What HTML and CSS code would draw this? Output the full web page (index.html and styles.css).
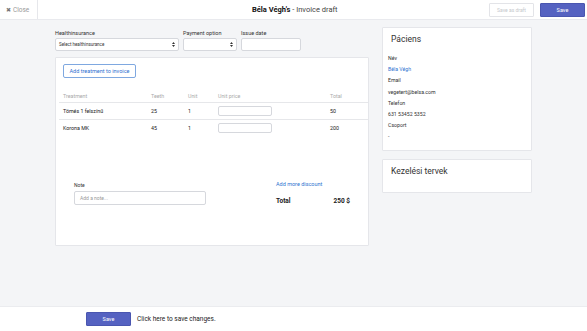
FILE: index.html
```html
<!DOCTYPE html>
<html lang="hu">
<head>
    <meta charset="UTF-8">
    <meta name="viewport" content="width=device-width, initial-scale=1.0">
    <title>Invoice draft</title>
    <link rel="stylesheet" href="styles.css">
</head>
<body>
    <!-- Top bar -->
    <div class="topbar">
        <div class="close-link"><span class="close-x">&#10006;</span> Close</div>
        <div class="page-title"><strong>Béla Végh's</strong> - Invoice draft</div>
        <div class="top-actions">
            <button class="btn btn-ghost">Save as draft</button>
            <button class="btn btn-primary btn-top">Save</button>
        </div>
    </div>

    <div class="content">
        <div class="main-col">
            <div class="field-row">
                <div class="field field-hi">
                    <label>Healthinsurance</label>
                    <div class="select">Select healthinsurance
                        <svg class="arrows" width="3" height="5" viewBox="0 0 3 5"><path d="M1.5 0 L3 2 L0 2 Z M0 3 L3 3 L1.5 5 Z" fill="#333"/></svg>
                    </div>
                </div>
                <div class="field field-pay">
                    <label>Payment option</label>
                    <div class="select">
                        <svg class="arrows" width="3" height="5" viewBox="0 0 3 5"><path d="M1.5 0 L3 2 L0 2 Z M0 3 L3 3 L1.5 5 Z" fill="#333"/></svg>
                    </div>
                </div>
                <div class="field field-date">
                    <label>Issue date</label>
                    <div class="input"></div>
                </div>
            </div>

            <div class="card invoice-card">
                <button class="btn btn-outline">Add treatment to invoice</button>

                <table class="items">
                    <thead>
                        <tr>
                            <th class="c-treat">Treatment</th>
                            <th class="c-teeth">Teeth</th>
                            <th class="c-unit">Unit</th>
                            <th class="c-price">Unit price</th>
                            <th class="c-total">Total</th>
                        </tr>
                    </thead>
                    <tbody>
                        <tr>
                            <td>Tömés 1 felszínű</td>
                            <td>25</td>
                            <td>1</td>
                            <td><div class="input price-input"></div></td>
                            <td>50</td>
                        </tr>
                        <tr>
                            <td>Korona MK</td>
                            <td>45</td>
                            <td>1</td>
                            <td><div class="input price-input"></div></td>
                            <td>200</td>
                        </tr>
                    </tbody>
                </table>

                <div class="invoice-foot">
                    <div class="note">
                        <label>Note</label>
                        <div class="input note-input">Add a note...</div>
                    </div>
                    <div class="sum">
                        <a class="link">Add more discount</a>
                        <div class="total-row"><span>Total</span><span>250 $</span></div>
                    </div>
                </div>
            </div>
        </div>

        <div class="side-col">
            <div class="card side-card">
                <div class="side-title">Páciens</div>
                <div class="side-line">Név</div>
                <div class="side-line blue">Béla Végh</div>
                <div class="side-line">Email</div>
                <div class="side-line">vegetert@belsa.com</div>
                <div class="side-line">Telefon</div>
                <div class="side-line">631 53452 5352</div>
                <div class="side-line">Csoport</div>
                <div class="side-line">-</div>
            </div>
            <div class="card side-card plans">
                <div class="side-title">Kezelési tervek</div>
            </div>
        </div>
    </div>

    <!-- Bottom save bar -->
    <div class="bottombar">
        <button class="btn btn-primary btn-bottom">Save</button>
        <span class="hint">Click here to save changes.</span>
    </div>
</body>
</html>
```

FILE: styles.css
```css
* {
    box-sizing: border-box;
}

body {
    margin: 0;
    height: 331px;
    font-family: Roboto, "Liberation Sans", sans-serif;
    font-size: 5.5px;
    color: #222;
    background-color: #f4f5f7;
    display: flex;
    flex-direction: column;
}

/* top bar */
.topbar {
    height: 20px;
    background-color: #fff;
    border-bottom: 1px solid #e9eaee;
    display: flex;
    align-items: center;
    position: relative;
}

.close-link {
    height: 100%;
    width: 38px;
    border-right: 1px solid #e6e7eb;
    display: flex;
    align-items: center;
    padding-left: 6px;
    color: #9a9a9a;
    font-size: 6.5px;
}

.close-x {
    font-size: 6px;
    margin-right: 2px;
    color: #777;
}

.page-title {
    position: absolute;
    left: 252px;
    top: 5px;
    font-size: 7.5px;
    color: #444;
}

.page-title strong {
    color: #111;
}

.top-actions {
    margin-left: auto;
    display: flex;
    gap: 6px;
    padding-right: 2px;
}

.btn {
    font-family: inherit;
    border-radius: 1px;
    cursor: pointer;
    padding: 0;
}

.btn-ghost {
    width: 45px;
    height: 14px;
    font-size: 5px;
    color: #c5c7cc;
    background-color: #fff;
    border: 1px solid #e3e4e8;
}

.btn-primary {
    background-color: #5562c1;
    border: 1px solid #4a56b0;
    color: #fff;
    font-size: 5.5px;
}

.btn-top {
    width: 45px;
    height: 14px;
}

/* content */
.content {
    flex: 1;
    display: flex;
    padding: 7px 0 0 55px;
}

.main-col {
    width: 314px;
}

.field-row {
    display: flex;
    margin-top: 3px;
}

.field label {
    display: block;
    font-size: 5.5px;
    color: #333;
    margin-bottom: 2px;
}

.field-hi {
    width: 124px;
    margin-right: 4px;
}

.field-pay {
    width: 54px;
    margin-right: 4px;
}

.field-date {
    width: 60px;
}

.select, .input {
    height: 13px;
    background-color: #fff;
    border: 1px solid #d6d8dd;
    border-radius: 2px;
}

.select {
    display: flex;
    align-items: center;
    padding: 0 3px 0 3px;
    font-size: 4.5px;
    color: #333;
}

.arrows {
    margin-left: auto;
}

.card {
    background-color: #fff;
    border: 1px solid #e5e6ea;
    border-radius: 1px;
}

.invoice-card {
    margin-top: 6px;
    height: 189px;
    padding: 6px 0 0 0;
}

.btn-outline {
    margin-left: 7px;
    width: 73px;
    height: 14px;
    font-size: 5.5px;
    color: #2f6fcf;
    background-color: #fff;
    border: 1px solid #7fa8e0;
    border-radius: 2px;
}

.items {
    margin: 12px 0 0 3px;
    width: 309px;
    border-collapse: collapse;
    font-size: 5.3px;
}

.items th {
    text-align: left;
    font-weight: normal;
    color: #aaa;
    height: 12px;
    padding: 0 0 0 4px;
    border-bottom: 1px solid #e6e7ea;
}

.items td {
    height: 17px;
    padding: 0 0 0 4px;
    color: #222;
    border-bottom: 1px solid #e6e7ea;
}

.items tr:last-child td {
    border-bottom: none;
}

.c-treat { width: 88px; }
.c-teeth { width: 37px; }
.c-unit { width: 30px; }
.c-price { width: 112px; }

.price-input {
    width: 54px;
    height: 10px;
}

.invoice-foot {
    display: flex;
    margin-top: 46px;
    padding-left: 18px;
}

.note {
    width: 132px;
}

.note label {
    display: block;
    font-size: 5px;
    color: #333;
    margin-bottom: 3px;
}

.note-input {
    height: 14px;
    padding: 0 5px;
    display: flex;
    align-items: center;
    color: #999;
    font-size: 5px;
}

.sum {
    margin-left: 70px;
    width: 74px;
    margin-top: -1px;
}

.link {
    color: #2f74d0;
    font-size: 5.5px;
}

.total-row {
    display: flex;
    justify-content: space-between;
    font-weight: bold;
    font-size: 6.5px;
    margin-top: 10px;
}

/* side column */
.side-col {
    margin-left: 13px;
    width: 150px;
    display: flex;
    flex-direction: column;
    gap: 8px;
}

.side-card {
    padding: 6px 5px 7px 5px;
}

.side-title {
    font-size: 8.5px;
    font-weight: 400;
    color: #333;
    padding-left: 3px;
    margin-bottom: 9px;
}

.side-line {
    font-size: 5.2px;
    height: 11.2px;
    line-height: 11.2px;
    color: #333;
}

.side-line.blue {
    color: #2f74d0;
}

.plans {
    height: 34px;
}

/* bottom bar */
.bottombar {
    height: 25px;
    background-color: #fff;
    border-top: 1px solid #ebecef;
    display: flex;
    align-items: center;
    padding-left: 86px;
}

.btn-bottom {
    width: 45px;
    height: 14px;
}

.hint {
    margin-left: 6px;
    font-size: 6.5px;
    color: #222;
}
```
